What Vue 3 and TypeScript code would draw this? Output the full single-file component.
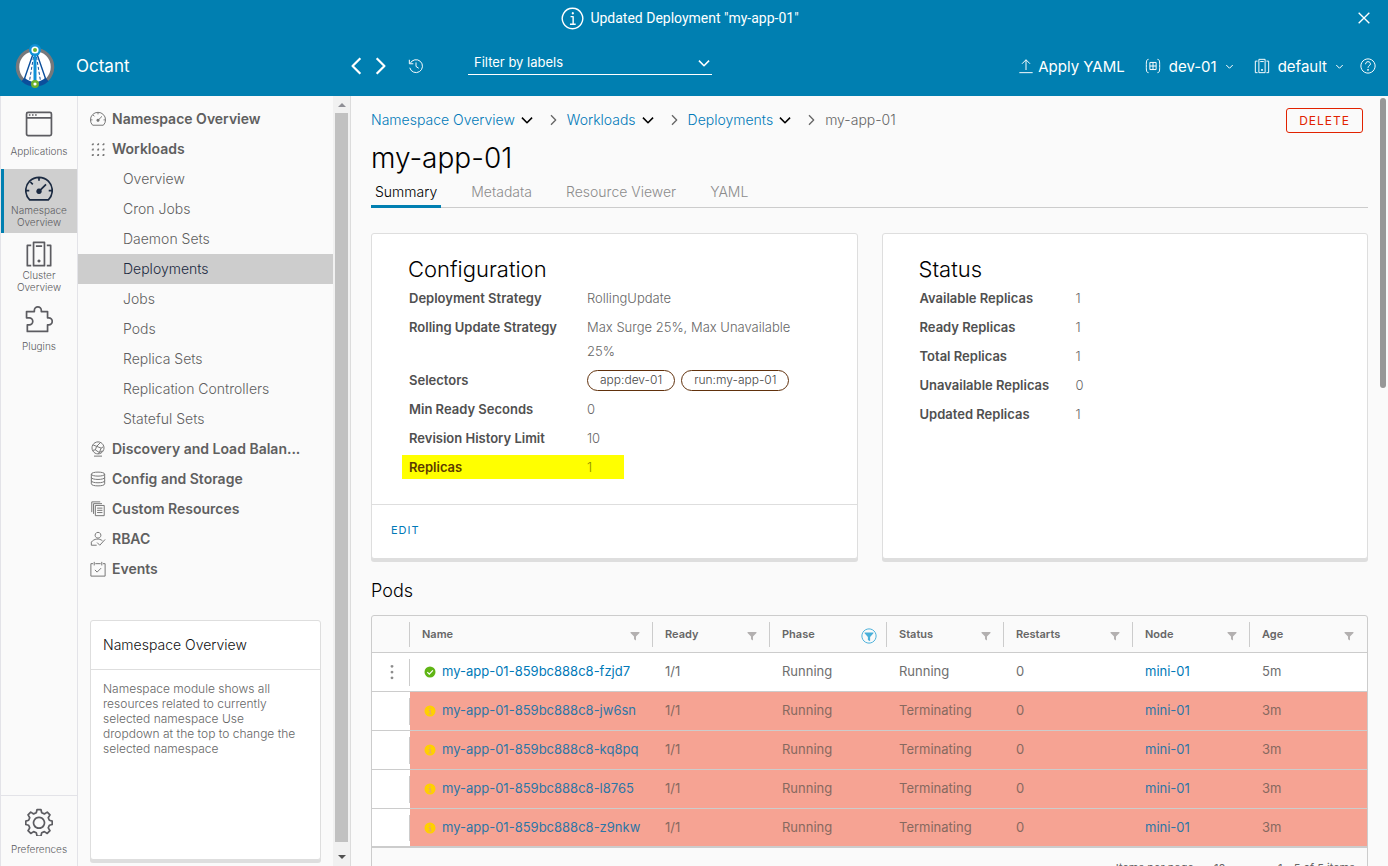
<script setup lang="ts">
import { h } from 'vue'

interface Glyph { line?: string; fill?: string; width?: number }

const glyphs: Record<string, Glyph> = {
  application: { line: 'M4 3h28a2 2 0 0 1 2 2v26a2 2 0 0 1-2 2H4a2 2 0 0 1-2-2V5a2 2 0 0 1 2-2zM2 10h32', fill: 'M5 5.500h2v2H5zM9 5.500h2v2H9zM13 5.500h2v2h-2z' },
  dashboard: { line: 'M6 32A17 17 0 1 1 30 32zM18 3.500v4M7 9l3 3M1.500 20h4M30.500 20h4M19 20l8-8', fill: 'M18 17.500a3.500 3.500 0 1 0 .01 0z' },
  cluster: { line: 'M11 3h14v30H11zM14 8h8M8 7H3v26h5M28 7h5v26h-5', fill: 'M18 25a2 2 0 1 0 .01 0z' },
  plugin: { line: 'M3 34V25.500h2.500a4.500 4.500 0 0 0 0-9H2V8.500h10V7a4.500 4.500 0 0 1 9 0v1.500h8v8h1.500a4.500 4.500 0 0 1 0 9H29V34z' },
  gear: { line: 'M15.500 2h5l1 4.200 3.400 1.400 3.700-2.300 3.500 3.500-2.200 3.700 1.400 3.300 3.700 1v4.400l-3.700 1-1.400 3.300 2.200 3.700-3.500 3.500-3.700-2.300-3.400 1.400-1 4.200h-5l-1-4.200-3.400-1.400-3.700 2.300-3.500-3.500 2.200-3.700-1.400-3.300-3.700-1v-4.400l3.700-1 1.400-3.300-2.200-3.700 3.500-3.500 3.700 2.300 3.400-1.400zM18 12a7 7 0 1 0 .01 0z' },
  grid: { line: 'M4 8h3V5M16 8h3V5M28 8h3V5M4 20h3v-3M16 20h3v-3M28 20h3v-3M4 32h3v-3M16 32h3v-3M28 32h3v-3', width: 3 },
  globe: { line: 'M18 2a13.500 13.500 0 1 0 .01 0zM9 34h18M7 9l8 3 8-8M15 12l-3 8-6 1M12 20l9 6 7-4M21 26l-2 3M15 12l10 4 5-3M25 16l-4 10' },
  storage: { line: 'M3 7c0-6 30-6 30 0s-30 6-30 0v22c0 6 30 6 30 0V7M3 14.500c0 6 30 6 30 0M3 22c0 6 30 6 30 0' },
  copies: { line: 'M12 10h20v23H12zM16 16h12M16 21h12M16 26h12M8 29V6h19M4 25V2h19' },
  user: { line: 'M18 3a6.500 6.500 0 1 0 .01 0zM15 32H3V25c6-8 18-9 25-3M16 26l6 6L34 19' },
  events: { line: 'M7 6H2v28h32V6h-5M12 6h12M9.500 2v8M26.500 2v8M11 20l5 5 9-9' },
  history: { line: 'M5 12A14.500 14.500 0 1 1 4 22M3 4v9h9M18 10v9l6 4' },
  info: { line: 'M18 2a16 16 0 1 0 .01 0zM15 15h4v12M14 27h9', fill: 'M18.500 8a1.800 1.800 0 1 0 .01 0z' },
  close: { line: 'M6 6l24 24M30 6L6 30', width: 3 },
  left: { line: 'M24 4L10 18l14 14', width: 4 },
  right: { line: 'M12 4l14 14-14 14', width: 4 },
  down: { line: 'M5 12l13 13 13-13', width: 4 },
  upload: { line: 'M18 4v23M9 13l9-9 9 9M3 33h30' },
  namespace: { line: 'M8 3C3 3 3 8 3 18s0 15 5 15M28 3c5 0 5 5 5 15s0 15-5 15M11 10h14v16H11zM18 10v16M11 18h14' },
  help: { line: 'M18 2a16 16 0 1 0 .01 0zM12.500 14c0-8 11-7 11-1 0 5-5.500 4-5.500 9', fill: 'M18 25a1.800 1.800 0 1 0 .01 0z' },
  filter: { fill: 'M2 4h32v3L21.500 20v14l-7-4V20L2 7z' },
  filterOn: { line: 'M18 2a16 16 0 1 0 .01 0z', fill: 'M8 10h20v2l-7.500 8v10l-5-3v-7L8 12z' },
  dots: { fill: 'M18 2a3.200 3.200 0 1 0 .01 0zM18 15a3.200 3.200 0 1 0 .01 0zM18 28a3.200 3.200 0 1 0 .01 0z' },
}

const Icon = (props: { name: string; size: number }) => {
  const g = glyphs[props.name]
  return h('svg', { viewBox: '0 0 36 36', width: props.size, height: props.size, 'aria-hidden': 'true', class: 'icon' }, [
    g.line ? h('path', { d: g.line, fill: 'none', stroke: 'currentColor', 'stroke-width': g.width ?? 2.2, 'stroke-linejoin': 'round' }) : null,
    g.fill ? h('path', { d: g.fill, fill: 'currentColor' }) : null,
  ])
}
Icon.props = ['name', 'size']

const modules = [
  { label: 'Applications', icon: 'application', active: false },
  { label: 'Namespace Overview', icon: 'dashboard', active: true },
  { label: 'Cluster Overview', icon: 'cluster', active: false },
  { label: 'Plugins', icon: 'plugin', active: false },
]

const sections: { label: string; icon: string; children?: string[] }[] = [
  { label: 'Namespace Overview', icon: 'dashboard' },
  { label: 'Workloads', icon: 'grid', children: ['Overview', 'Cron Jobs', 'Daemon Sets', 'Deployments', 'Jobs', 'Pods', 'Replica Sets', 'Replication Controllers', 'Stateful Sets'] },
  { label: 'Discovery and Load Balan...', icon: 'globe' },
  { label: 'Config and Storage', icon: 'storage' },
  { label: 'Custom Resources', icon: 'copies' },
  { label: 'RBAC', icon: 'user' },
  { label: 'Events', icon: 'events' },
]

const crumbs = ['Namespace Overview', 'Workloads', 'Deployments']
const tabs = ['Summary', 'Metadata', 'Resource Viewer', 'YAML']

const configuration: { label: string; value?: string; tags?: string[]; marked?: boolean }[] = [
  { label: 'Deployment Strategy', value: 'RollingUpdate' },
  { label: 'Rolling Update Strategy', value: 'Max Surge 25%, Max Unavailable 25%' },
  { label: 'Selectors', tags: ['app:dev-01', 'run:my-app-01'] },
  { label: 'Min Ready Seconds', value: '0' },
  { label: 'Revision History Limit', value: '10' },
  { label: 'Replicas', value: '1', marked: true },
]

const status = [
  { label: 'Available Replicas', value: '1' },
  { label: 'Ready Replicas', value: '1' },
  { label: 'Total Replicas', value: '1' },
  { label: 'Unavailable Replicas', value: '0' },
  { label: 'Updated Replicas', value: '1' },
]

const columns = ['Name', 'Ready', 'Phase', 'Status', 'Restarts', 'Node', 'Age']
const pods = [
  { id: 'fzjd7', status: 'Running', age: '5m' },
  { id: 'jw6sn', status: 'Terminating', age: '3m' },
  { id: 'kq8pq', status: 'Terminating', age: '3m' },
  { id: 'l8765', status: 'Terminating', age: '3m' },
  { id: 'z9nkw', status: 'Terminating', age: '3m' },
]
</script>

<template>
  <div class="app">
    <div class="alert" role="status">
      <Icon name="info" :size="23" />
      <span>Updated Deployment "my-app-01"</span>
      <button class="alert-close" aria-label="Close"><Icon name="close" :size="16" /></button>
    </div>

    <header class="header">
      <a class="brand" href="#">
        <svg class="logo" viewBox="0 0 40 46" width="40" height="46" aria-hidden="true">
          <circle cx="20" cy="24" r="17.500" fill="#fff" stroke="#77787b" stroke-width="3.500" />
          <path d="M8 36.500a17.500 17.500 0 0 0 24 0" fill="none" stroke="#0b4f9c" stroke-width="4.500" />
          <path d="M18 11L9 37M22 11l9 26" stroke="#0b4f9c" stroke-width="1.400" />
          <path d="M18.500 14l-4 24M21.500 14l4 24" stroke="#0b4f9c" stroke-width="1" stroke-dasharray="3 2" />
          <path d="M20 8v32" stroke="#1091d6" stroke-width="3" />
          <circle cx="20" cy="7" r="6" fill="#1091d6" />
          <circle cx="20" cy="7" r="2.800" fill="#6eb12c" stroke="#fff" stroke-width="1.600" />
          <circle cx="20" cy="41" r="2.800" fill="#fff" stroke="#6eb12c" stroke-width="2.400" />
        </svg>
        <span>Octant</span>
      </a>
      <div class="history">
        <button aria-label="Back"><Icon name="left" :size="20" /></button>
        <button aria-label="Forward"><Icon name="right" :size="20" /></button>
        <button class="recent" aria-label="History"><Icon name="history" :size="16" /></button>
      </div>
      <div class="filter">
        <select aria-label="Filter by labels"><option>Filter by labels</option></select>
        <Icon name="down" :size="14" />
      </div>
      <div class="actions">
        <button class="apply"><Icon name="upload" :size="16" />Apply YAML</button>
        <button class="context"><Icon name="namespace" :size="16" />dev-01<Icon name="down" :size="9" /></button>
        <button class="context"><Icon name="cluster" :size="16" />default<Icon name="down" :size="9" /></button>
        <button class="help" aria-label="Help"><Icon name="help" :size="16" /></button>
      </div>
    </header>

    <div class="body">
      <nav class="rail" aria-label="Modules">
        <a v-for="m in modules" :key="m.label" href="#" class="module" :class="{ active: m.active }">
          <Icon :name="m.icon" :size="28" /><span>{{ m.label }}</span>
        </a>
        <div class="preferences">
          <button class="module"><Icon name="gear" :size="28" /><span>Preferences</span></button>
        </div>
      </nav>

      <div class="sidebar">
        <div class="side-content">
          <nav aria-label="Navigation">
            <template v-for="s in sections" :key="s.label">
              <a href="#" class="section"><Icon :name="s.icon" :size="16" /><span>{{ s.label }}</span></a>
              <a v-for="c in s.children" :key="c" href="#" class="child" :class="{ active: c === 'Deployments' }">{{ c }}</a>
            </template>
          </nav>
          <aside class="hint">
            <h2>Namespace Overview</h2>
            <p>Namespace module shows all resources related to currently selected namespace Use dropdown at the top to change the selected namespace</p>
          </aside>
        </div>
        <div class="scrollbar" aria-hidden="true">
          <i class="arrow up"></i><i class="thumb"></i><i class="arrow"></i>
        </div>
      </div>

      <main class="main">
        <div class="toolbar">
          <ol class="crumbs">
            <li v-for="c in crumbs" :key="c">
              <a href="#">{{ c }}</a>
              <button :aria-label="c + ' menu'"><Icon name="down" :size="14" /></button>
              <Icon name="right" :size="12" />
            </li>
            <li>my-app-01</li>
          </ol>
          <button class="delete">DELETE</button>
        </div>
        <h1>my-app-01</h1>
        <div class="tabs" role="tablist">
          <button v-for="(t, i) in tabs" :key="t" role="tab" :aria-selected="i === 0" :class="{ active: i === 0 }">{{ t }}</button>
        </div>

        <div class="cards">
          <section class="card">
            <div class="card-body">
              <h2>Configuration</h2>
              <dl>
                <div v-for="r in configuration" :key="r.label" :class="{ marked: r.marked }">
                  <dt>{{ r.label }}</dt>
                  <dd>{{ r.value }}<span v-for="t in r.tags" :key="t" class="tag">{{ t }}</span></dd>
                </div>
              </dl>
            </div>
            <footer><button>EDIT</button></footer>
          </section>
          <section class="card">
            <div class="card-body">
              <h2>Status</h2>
              <dl class="narrow">
                <div v-for="r in status" :key="r.label"><dt>{{ r.label }}</dt><dd>{{ r.value }}</dd></div>
              </dl>
            </div>
          </section>
        </div>

        <h3>Pods</h3>
        <div class="grid">
          <table>
            <colgroup>
              <col class="c-menu" /><col /><col class="c-mid" /><col class="c-mid" /><col class="c-mid" /><col class="c-wide" /><col class="c-mid" /><col class="c-mid" />
            </colgroup>
            <thead>
              <tr>
                <th><i class="rule"></i></th>
                <th v-for="c in columns" :key="c">
                  <div class="head">
                    <span>{{ c }}</span>
                    <button v-if="c === 'Phase'" class="on" aria-label="Filter Phase"><Icon name="filterOn" :size="16" /></button>
                    <button v-else :aria-label="'Filter ' + c"><Icon name="filter" :size="10" /></button>
                  </div>
                  <i v-if="c !== 'Age'" class="rule"></i>
                </th>
              </tr>
            </thead>
            <tbody>
              <tr v-for="p in pods" :key="p.id" :class="{ ending: p.status === 'Terminating' }">
                <td class="menu">
                  <button v-if="p.status === 'Running'" aria-label="Actions"><Icon name="dots" :size="16" /></button>
                  <i class="rule"></i>
                </td>
                <td>
                  <span class="pod">
                    <svg viewBox="0 0 12 12" width="12" height="12" aria-hidden="true">
                      <template v-if="p.status === 'Running'">
                        <circle cx="6" cy="6" r="5.500" fill="#60b515" />
                        <path d="M3.300 6.200l2 2 3.600-3.900" fill="none" stroke="#fff" stroke-width="1.200" />
                      </template>
                      <template v-else>
                        <circle cx="6" cy="6" r="5.500" fill="#ffd000" />
                        <path d="M6 2.500v1.500M4.800 5.500H6.200v3.300M4.500 9h3.200" fill="none" stroke="#e8a866" stroke-width="1.200" />
                      </template>
                    </svg>
                    <a href="#">my-app-01-859bc888c8-{{ p.id }}</a>
                  </span>
                </td>
                <td>1/1</td>
                <td>Running</td>
                <td>{{ p.status }}</td>
                <td>0</td>
                <td><a href="#">mini-01</a></td>
                <td>{{ p.age }}</td>
              </tr>
            </tbody>
          </table>
          <div class="pager">
            <label for="page-size">Items per page</label>
            <span class="size"><select id="page-size"><option>10</option></select><Icon name="down" :size="10" /></span>
            <span>1 - 5 of 5 items</span>
          </div>
        </div>
        <i class="main-thumb" aria-hidden="true"></i>
      </main>
    </div>
  </div>
</template>

<style>
body { margin: 0; }
</style>

<style scoped>
.app {
  height: 100vh;
  display: flex;
  flex-direction: column;
  overflow: hidden;
  background: #fafafa;
  color: #666;
  font-family: Inter, "Open Sans", sans-serif;
  font-size: 14px;
  font-weight: 300;
}
* { box-sizing: border-box; }
button, select { font: inherit; color: inherit; background: none; border: 0; padding: 0; margin: 0; appearance: none; }
button { display: inline-flex; align-items: center; cursor: pointer; }
a { color: #0079b8; text-decoration: none; }
h1, h2, h3, p, dl, dd, ol { margin: 0; padding: 0; font-weight: 300; }
.icon { display: block; flex: none; }

.alert {
  flex: none;
  position: relative;
  height: 36px;
  padding-right: 28px;
  display: flex;
  align-items: center;
  justify-content: center;
  gap: 6px;
  background: #007fb1;
  color: #fff;
  font: 400 14px Roboto, "Liberation Sans", sans-serif;
}
.alert-close { position: absolute; right: 16px; top: 10px; }

.header {
  flex: none;
  height: 60px;
  padding: 0 12px 0 15px;
  display: flex;
  align-items: center;
  background: #007fb1;
  color: #fff;
  font-size: 15px;
  font-weight: 400;
}
.brand { width: 332px; display: flex; align-items: center; gap: 21px; color: #fff; font-size: 17px; }
.history { width: 121px; display: flex; align-items: center; gap: 3px; }
.recent { margin-left: 15px; }
.filter { width: 244px; height: 24px; margin-top: -6px; display: grid; align-items: center; border-bottom: 1px solid #fff; font-size: 13px; }
.filter > * { grid-area: 1 / 1; }
.filter select { padding-left: 6px; padding-bottom: 1px; }
.filter .icon { justify-self: end; margin-right: 1px; }
.actions { margin-left: auto; display: flex; align-items: center; gap: 20px; }
.apply { gap: 4px; }
.context { gap: 8px; }
.help { margin-left: -4px; }

.body { flex: 1; min-height: 0; display: flex; }
.rail { flex: none; width: 78px; padding-top: 8px; display: flex; flex-direction: column; gap: 1px; border: solid #e3e3e8; border-width: 0 1px; }
.module { width: 100%; height: 64px; padding-top: 6px; display: flex; flex-direction: column; align-items: center; gap: 1px; color: #5c5c61; font-size: 10px; line-height: 12px; text-align: center; border-left: 3px solid transparent; border-right: 3px solid transparent; }
.module span { flex: none; min-height: 24px; display: flex; align-items: center; }
.module.active { background: #cfcfcf; border-left-color: #007fb1; border-right-color: #cfcfcf; }
.module.active .icon { color: #1b2a41; }
.preferences { margin-top: auto; padding-top: 6px; border-top: 1px solid #e3e3e8; }

.sidebar { flex: none; width: 273px; display: flex; border-right: 1px solid #dcdcdc; }
.side-content { flex: 1; min-width: 0; padding: 8px 0 3px; display: flex; flex-direction: column; }
.section, .child { display: block; height: 30px; line-height: 30px; color: #5f5f5f; }
.section { display: flex; align-items: center; gap: 6px; padding: 0 12px; font-weight: 600; white-space: nowrap; }
.section .icon { color: #757575; }
.child { padding-left: 45px; }
.child.active { background: #cdcdcd; color: #1b2a41; }
.hint { flex: 1; margin: 36px 12px 3px; background: #fff; border: 1px solid #dedede; border-radius: 3px; box-shadow: 0 3px 0 #dedede; }
.hint h2 { padding: 0 12px; font-size: 14px; line-height: 48px; color: #111; border-bottom: 1px solid #dedede; }
.hint p { padding: 11px 20px 12px 12px; font-size: 12px; line-height: 15px; }
.scrollbar { flex: none; width: 17px; display: flex; flex-direction: column; align-items: center; background: #f1f1f1; }
.scrollbar .thumb { flex: 1; width: 13px; background: #c1c1c1; }
.arrow { flex: none; height: 24px; display: flex; align-items: center; }
.arrow:last-child { padding-top: 6px; }
.arrow.up { height: 17px; }
.arrow::before { content: ""; border: 4px solid transparent; border-top-color: #505050; border-bottom: 0; }
.arrow.up::before { border-bottom: 4px solid #8f8f96; border-top: 0; }

.main { position: relative; flex: 1; min-width: 0; padding: 12px 20px 0; overflow: hidden; }
.main-thumb { position: absolute; right: 2px; top: 2px; width: 6px; height: 290px; border-radius: 3px; background: #979797; }
.toolbar { height: 25px; display: flex; align-items: center; justify-content: space-between; padding-right: 5px; }
.crumbs { display: flex; gap: 8px; padding-bottom: 2px; list-style: none; }
.crumbs li { display: flex; align-items: center; }
.crumbs button { margin: 0 13px 0 5px; color: #000; }
.delete { height: 25px; padding: 0 12px; border: 1px solid #e12200; border-radius: 3px; color: #e12200; font-size: 12px; font-weight: 400; letter-spacing: 1px; }
h1 { margin-top: 7px; font-size: 28px; line-height: 36px; color: #000; }
.tabs { display: flex; gap: 26px; border-bottom: 1px solid #ccc; }
.tabs button { height: 32px; margin-bottom: -1px; padding: 2px 4px 0; border-bottom: 3px solid transparent; color: #8c8c8c; }
.tabs .active { color: #000; border-bottom-color: #007fb1; }

.cards { margin-top: 25px; display: grid; grid-template-columns: 1fr 1fr; gap: 24px; }
.card { display: flex; flex-direction: column; background: #fff; border: 1px solid #dedede; border-radius: 3px; box-shadow: 0 3px 0 #dedede; }
.card-body { flex: 1; padding: 20px 36px 25px; }
.card h2 { margin-bottom: 2px; font-size: 22px; line-height: 30px; color: #000; }
.card dl { display: grid; gap: 5px; font-size: 13px; line-height: 24px; }
.card dl > div { display: grid; grid-template-columns: 178px 214px; padding-left: 1px; }
.card dl.narrow > div { grid-template-columns: 156px 1fr; }
.card dt { font-weight: 600; color: #505050; }
.card dl .marked { width: 222px; margin-left: -6px; padding-left: 7px; grid-template-columns: 178px 1fr; background: #ff0; }
.card .marked dt { color: #5c3a00; }
.marked dd { color: #8c8c00; }
.card dd { display: flex; align-items: center; gap: 6px; }
.tag { height: 21px; padding: 0 12px; display: flex; align-items: center; border: 1px solid #61310c; border-radius: 11px; font-size: 12px; color: #454545; white-space: nowrap; }
.card footer { height: 54px; padding: 0 19px 4px; display: flex; border-top: 1px solid #dedede; }
.card footer button { color: #0079b8; font-size: 11px; font-weight: 400; letter-spacing: 1px; }

h3 { margin: 20px 0 12px; font-size: 18px; line-height: 24px; color: #000; }
.grid { border: 1px solid #ccc; border-radius: 3px; }
table { width: 100%; table-layout: fixed; border-collapse: separate; border-spacing: 0; font-size: 13px; }
.c-menu { width: 38px; }
.c-mid { width: 117px; }
.c-wide { width: 129px; }
th, td { position: relative; padding: 0 12px; text-align: left; border-bottom: 1px solid #ccc; }
th { height: 37px; font-size: 11px; font-weight: 600; }
th:nth-child(n+2) { padding-right: 13px; }
td { height: 39px; padding-bottom: 2px; background: #fff; white-space: nowrap; font-weight: 400; color: #6e6e6e; }
tr:last-child td { border-bottom-width: 2px; }
.rule { position: absolute; right: 0; top: 6px; bottom: 5px; width: 1px; background: #ccc; }
.head { height: 16px; display: flex; align-items: center; justify-content: space-between; }
.head button { padding-top: 4px; color: #b3b0b0; }
.head .on { color: #49afd9; margin-right: -3px; }
.menu button { color: #8c8c8c; vertical-align: middle; }
.pod { display: flex; align-items: center; gap: 6px; padding-left: 2px; }
.pod svg { margin-top: 2px; }
.ending td:nth-child(n+2) { background: #f6a393; color: #87695f; }
.ending a { color: #2d76a6; }
.pager { height: 40px; padding: 0 12px; display: flex; align-items: center; justify-content: flex-end; gap: 20px; font-size: 11px; font-weight: 400; }
.size { display: flex; align-items: center; gap: 16px; margin-right: 6px; }
</style>
